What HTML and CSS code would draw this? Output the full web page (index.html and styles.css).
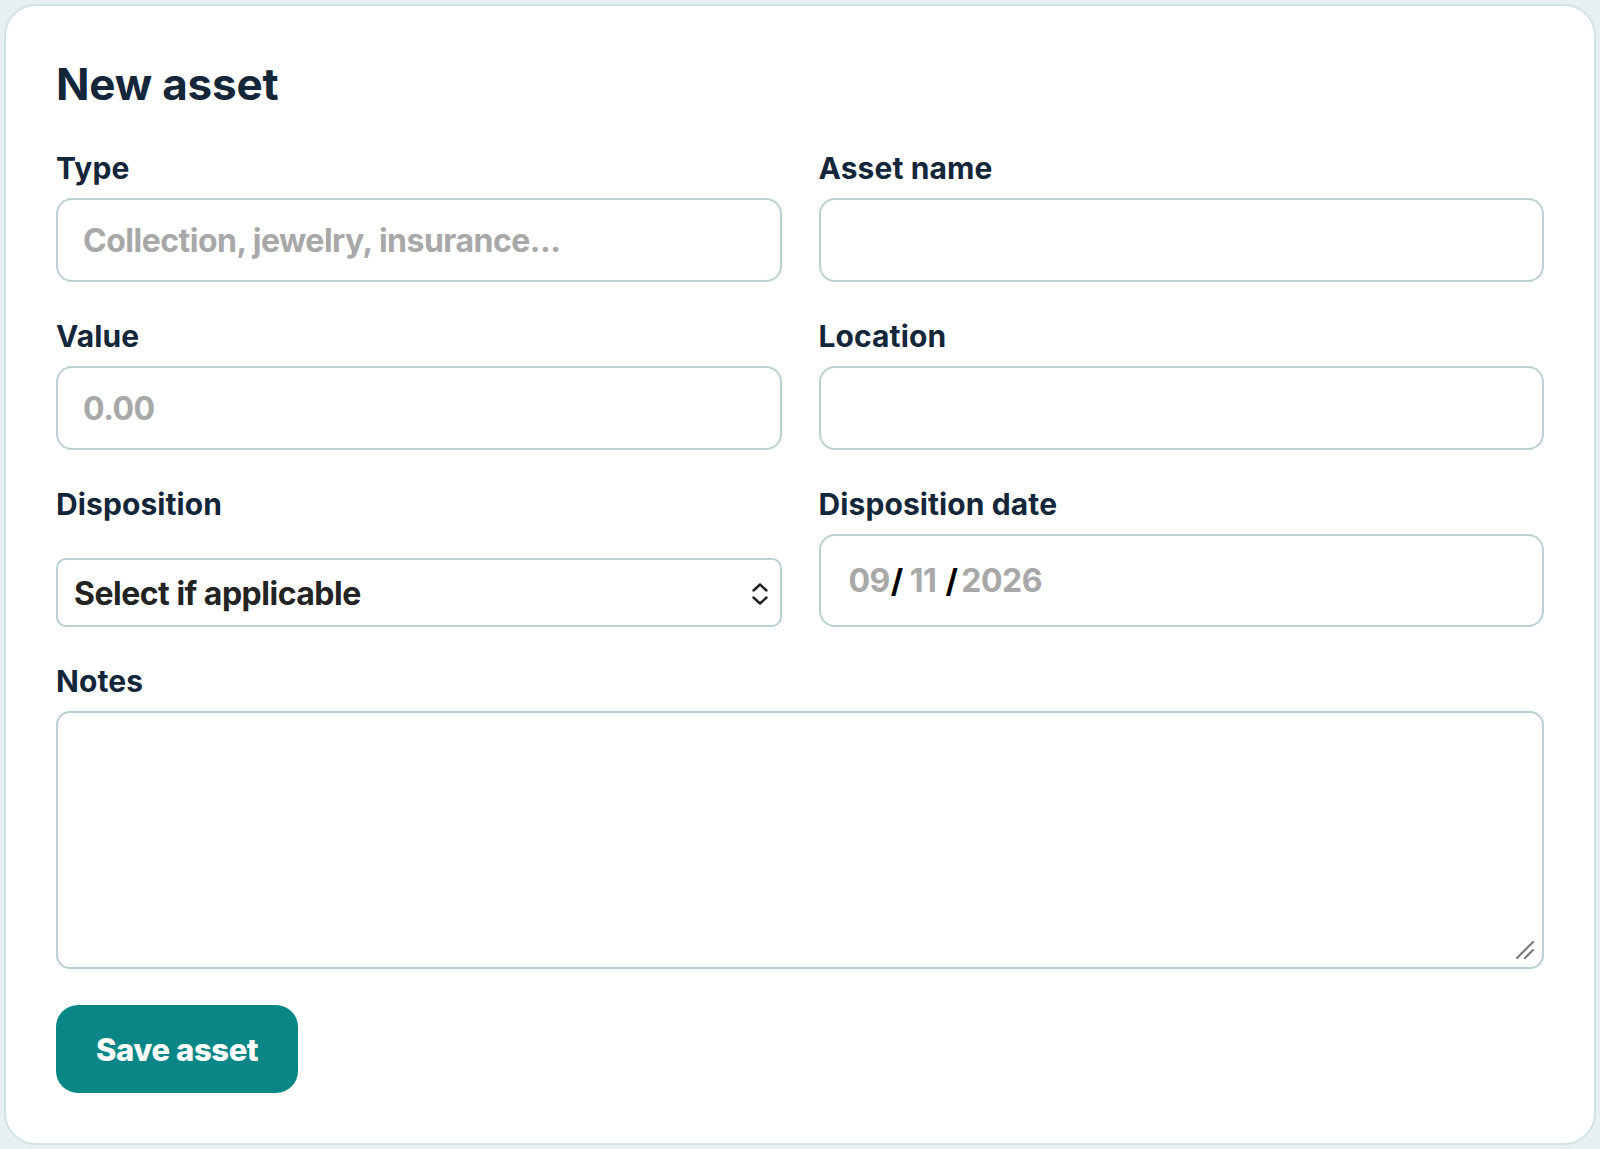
FILE: index.html
```html
<!DOCTYPE html>
<html lang="en">
<head>
<meta charset="utf-8">
<title>New asset</title>
<link rel="stylesheet" href="styles.css">
</head>
<body>
<div class="card">
  <h1 class="title">New asset</h1>
  <form class="grid">
    <div class="field">
      <label class="label">Type</label>
      <input class="input" type="text" placeholder="Collection, jewelry, insurance...">
    </div>
    <div class="field">
      <label class="label">Asset name</label>
      <input class="input" type="text">
    </div>
    <div class="field">
      <label class="label">Value</label>
      <input class="input" type="text" placeholder="0.00">
    </div>
    <div class="field">
      <label class="label">Location</label>
      <input class="input" type="text">
    </div>
    <div class="field">
      <label class="label">Disposition</label>
      <div class="select">
        <span class="select-text">Select if applicable</span>
        <svg class="chevrons" width="18" height="24" viewBox="0 0 18 24" fill="none" stroke="#222" stroke-width="2.4" stroke-linecap="round" stroke-linejoin="round"><path d="M2.5 8.5 L9 2.5 L15.5 8.5"/><path d="M2.5 15.5 L9 21.5 L15.5 15.5"/></svg>
      </div>
    </div>
    <div class="field">
      <label class="label">Disposition date</label>
      <div class="input date">
        <span class="seg">09</span><span class="sep">/</span><span class="seg sp1">11</span><span class="sep sp2">/</span><span class="seg sp3">2026</span>
      </div>
    </div>
    <div class="field full">
      <label class="label">Notes</label>
      <div class="ta-wrap">
        <textarea class="textarea"></textarea>
        <svg class="grip" width="20" height="20" viewBox="0 0 20 20" fill="none" stroke="#7a7a7a" stroke-width="2.2" stroke-linecap="round"><path d="M2 18 L18 2"/><path d="M10 18 L18 10"/></svg>
      </div>
    </div>
  </form>
  <button class="btn" type="button">Save asset</button>
</div>
</body>
</html>
```

FILE: styles.css
```css
* {
  box-sizing: border-box;
}

html, body {
  margin: 0;
  padding: 0;
}

body {
  background: #e7eff0;
  font-family: "Inter", "Noto Sans", "Liberation Sans", sans-serif;
  color: #14263a;
}

.card {
  margin: 4px 4px 6px 4px;
  background: #ffffff;
  border: 2px solid #d3e3e5;
  border-radius: 32px;
  padding: 52px 50px 50px 50px;
}

.title {
  margin: 0 0 41px 0;
  font-size: 44px;
  line-height: 52px;
  font-weight: 700;
  letter-spacing: -0.2px;
  color: #14263a;
}

.grid {
  display: grid;
  grid-template-columns: 1fr 1fr;
  column-gap: 37px;
  row-gap: 37px;
  margin: 0;
}

.field {
  display: flex;
  flex-direction: column;
}

.field.full {
  grid-column: 1 / -1;
}

.label {
  font-size: 30px;
  line-height: 34px;
  font-weight: 700;
  letter-spacing: 0.1px;
  color: #14263a;
  margin-bottom: 13px;
}

.input {
  height: 84px;
  width: 100%;
  border: 2px solid #b9d1d5;
  border-radius: 16px;
  background: #ffffff;
  padding: 0 25px;
  font-family: inherit;
  font-size: 32px;
  font-weight: 700;
  letter-spacing: -0.5px;
  color: #222;
  outline: none;
}

.input::placeholder {
  color: #a8a8a8;
}

.select {
  margin-top: auto;
  height: 69px;
  border: 2px solid #b9d1d5;
  border-radius: 10px;
  background: #ffffff;
  padding: 0 11px 0 16px;
  display: flex;
  align-items: center;
  justify-content: space-between;
}

.select-text {
  font-size: 32px;
  font-weight: 700;
  letter-spacing: -0.5px;
  color: #232323;
  padding-top: 1px;
}

.chevrons {
  display: block;
  margin-top: 2px;
}

.date {
  height: 93px;
  display: flex;
  align-items: center;
  padding-left: 28px;
  font-size: 32px;
  font-weight: 700;
  letter-spacing: -0.5px;
}

.seg {
  color: #a8a8a8;
}

.sep {
  color: #000;
  font-weight: 700;
  margin-left: 1px;
}

.sp1 {
  margin-left: 7px;
}

.sp2 {
  margin-left: 9px;
}

.sp3 {
  margin-left: 4px;
}

.ta-wrap {
  position: relative;
}

.textarea {
  display: block;
  width: 100%;
  height: 258px;
  border: 2px solid #b9d1d5;
  border-radius: 14px;
  background: #ffffff;
  resize: none;
  outline: none;
  font-family: inherit;
  font-size: 28px;
  padding: 20px 25px;
}

.grip {
  position: absolute;
  right: 9px;
  bottom: 9px;
}

.btn {
  display: block;
  margin-top: 36px;
  height: 88px;
  padding: 0 40px;
  border: none;
  border-radius: 22px;
  background: #0b8686;
  color: #ffffff;
  font-family: inherit;
  font-size: 31px;
  font-weight: 800;
  letter-spacing: -0.4px;
  cursor: pointer;
}
```
